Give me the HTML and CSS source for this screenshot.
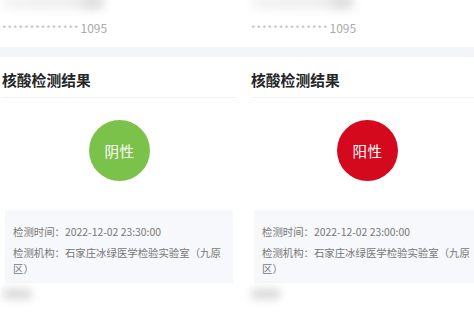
FILE: index.html
```html
<!DOCTYPE html>
<html lang="zh-CN">
<head>
    <meta charset="UTF-8">
    <meta name="viewport" content="width=device-width, initial-scale=1.0">
    <title>核酸检测结果</title>
    <link rel="stylesheet" href="styles.css">
</head>
<body>

<main class="compare">
    <!-- Left screenshot: negative -->
    <section class="panel panel-left">
        <div class="name-row"><span class="name-blur"></span></div>
        <div class="id-row"><span class="stars">**************</span><span class="id-tail">1095</span></div>
        <div class="band"></div>
        <h2 class="title">核酸检测结果</h2>
        <div class="result">
            <div class="badge badge-negative">阴性</div>
        </div>
        <div class="info-box">
            <p>检测时间：2022-12-02 23:30:00</p>
            <p>检测机构：石家庄冰绿医学检验实验室（九原区）</p>
        </div>
        <div class="foot-row"><span class="foot-blur"></span></div>
    </section>

    <!-- Right screenshot: positive -->
    <section class="panel panel-right">
        <div class="name-row"><span class="name-blur"></span></div>
        <div class="id-row"><span class="stars">**************</span><span class="id-tail">1095</span></div>
        <div class="band"></div>
        <h2 class="title">核酸检测结果</h2>
        <div class="result">
            <div class="badge badge-positive">阳性</div>
        </div>
        <div class="info-box">
            <p>检测时间：2022-12-02 23:00:00</p>
            <p>检测机构：石家庄冰绿医学检验实验室（九原区）</p>
        </div>
        <div class="foot-row"><span class="foot-blur"></span></div>
    </section>
</main>

</body>
</html>
```

FILE: styles.css
```css
:root {
    --text-dark: #262626;
    --text-grey: #777;
    --mask-grey: #bdbdbd;
    --band-color: #f3f5f8;
    --box-color: #f6f8fb;
    --green: #7ac24a;
    --red: #d5091d;
}

* {
    margin: 0;
    padding: 0;
    box-sizing: border-box;
}

body {
    width: 474px;
    height: 316px;
    overflow: hidden;
    background: #fff;
    font-family: "Noto Sans CJK SC", "Noto Sans", sans-serif;
    color: var(--text-dark);
}

.compare {
    display: flex;
    width: 474px;
    height: 316px;
    overflow: hidden;
}

.panel {
    flex: 0 0 249px;
    padding-left: 14px;
}

.panel-left {
    margin-left: -12px;
}

.name-row {
    height: 18px;
    position: relative;
}

.name-blur {
    position: absolute;
    left: 0;
    top: -6px;
    width: 104px;
    height: 16px;
    border-radius: 8px;
    background: linear-gradient(90deg, #f4f4f4 0%, #f0f0f0 70%, #dcdcdc 88%, #ececec 100%);
    filter: blur(4px);
}

.id-row {
    height: 20px;
    line-height: 20px;
    font-size: 12px;
    white-space: nowrap;
}

.stars {
    color: var(--mask-grey);
    font-size: 9.5px;
    letter-spacing: 1.1px;
}

.id-tail {
    color: #aaa;
    margin-left: 1px;
}

.band {
    margin-top: 9px;
    margin-left: -14px;
    height: 10px;
    background: var(--band-color);
}

.title {
    padding-top: 4px;
    height: 41px;
    line-height: 37px;
    font-size: 14.8px;
    font-weight: bold;
    color: var(--text-dark);
    border-bottom: 1px solid #f1f1f1;
}

.result {
    display: flex;
    justify-content: center;
    padding: 22px 0 29px;
}

.badge {
    width: 61px;
    height: 61px;
    border-radius: 50%;
    display: flex;
    align-items: center;
    justify-content: center;
    color: #fff;
    font-size: 14.5px;
    letter-spacing: 0.5px;
}

.badge-negative {
    background: var(--green);
}

.badge-positive {
    background: var(--red);
    margin-left: -2px;
}

.info-box {
    width: 228px;
    margin-left: 3px;
    padding: 14px 8px 6px;
    background: var(--box-color);
    font-size: 10.4px;
    line-height: 16px;
    color: var(--text-grey);
}

.info-box p + p {
    margin-top: 5px;
}

.foot-row {
    height: 20px;
    position: relative;
}

.foot-blur {
    position: absolute;
    left: 0;
    top: 6px;
    width: 30px;
    height: 10px;
    border-radius: 5px;
    background: #d8d8d8;
    filter: blur(4px);
}
```
